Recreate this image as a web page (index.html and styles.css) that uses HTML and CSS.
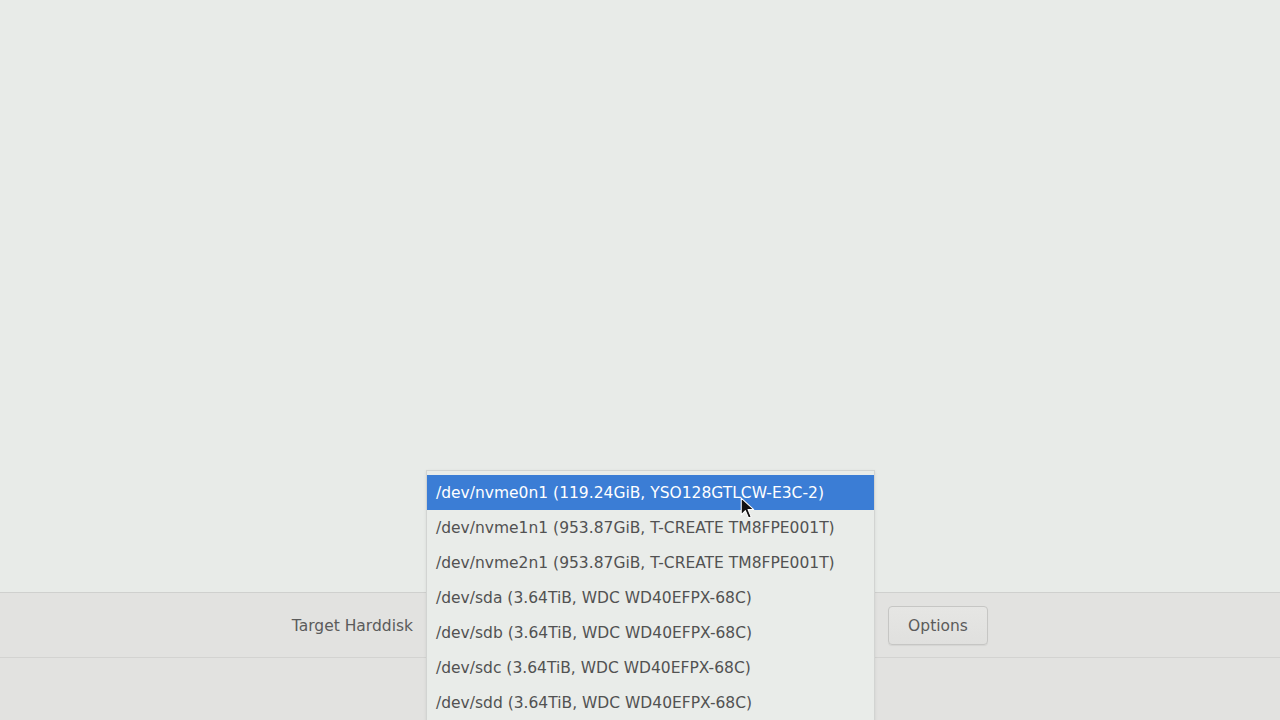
FILE: index.html
```html
<!DOCTYPE html>
<html>
<head>
<meta charset="utf-8">
<link rel="stylesheet" href="styles.css">
</head>
<body>
<div class="page">
  <div class="workspace"></div>
  <div class="bar">
    <div class="label">Target Harddisk</div>
    <div class="combo"></div>
    <button class="btn">Options</button>
  </div>
  <div class="footer"></div>
</div>
<div class="popup">
  <div class="item selected">/dev/nvme0n1 (119.24GiB, YSO128GTLCW-E3C-2)</div>
  <div class="item">/dev/nvme1n1 (953.87GiB, T-CREATE TM8FPE001T)</div>
  <div class="item">/dev/nvme2n1 (953.87GiB, T-CREATE TM8FPE001T)</div>
  <div class="item">/dev/sda (3.64TiB, WDC WD40EFPX-68C)</div>
  <div class="item">/dev/sdb (3.64TiB, WDC WD40EFPX-68C)</div>
  <div class="item">/dev/sdc (3.64TiB, WDC WD40EFPX-68C)</div>
  <div class="item">/dev/sdd (3.64TiB, WDC WD40EFPX-68C)</div>
</div>
<svg class="cursor" width="15" height="23" viewBox="0 0 14 22">
  <path d="M1 1 L1 17 L5 13 L8 20 L10.5 19 L7.5 12 L13 12 Z" fill="#111" stroke="#fff" stroke-width="1" stroke-linejoin="round"/>
</svg>
</body>
</html>
```

FILE: styles.css
```css
html, body {
  margin: 0;
  padding: 0;
  width: 1280px;
  height: 720px;
  overflow: hidden;
  background: #e8ebe8;
  font-family: "DejaVu Sans", sans-serif;
}
.page {
  display: flex;
  flex-direction: column;
  height: 720px;
}
.workspace {
  height: 592px;
  background: #e8ebe8;
}
.bar {
  height: 64px;
  background: #e2e2e0;
  border-top: 1px solid #cfd0ce;
  border-bottom: 1px solid #d3d3d1;
  display: flex;
  align-items: center;
}
.label {
  width: 413px;
  padding-top: 2px;
  text-align: right;
  font-size: 15.5px;
  color: #5b5b5b;
}
.combo {
  width: 449px;
  margin-left: 13px;
}
.btn {
  margin-left: 13px;
  width: 100px;
  height: 39px;
  border: 1px solid #c6c6c4;
  border-radius: 4px;
  background: linear-gradient(#e6e6e4, #e0e0de);
  box-shadow: 0 1px 1px rgba(0,0,0,0.06);
  font-family: "DejaVu Sans", sans-serif;
  font-size: 15.5px;
  color: #5b5b5b;
  padding: 1px 0 0 0;
}
.footer {
  flex: 1;
  background: #e2e2e0;
}
.popup {
  position: absolute;
  left: 426px;
  top: 470px;
  width: 447px;
  padding-top: 4px;
  background: #e9ece9;
  border: 1px solid #d2d4d2;
  box-shadow: 0 1px 3px rgba(0,0,0,0.08);
}
.item {
  height: 34px;
  line-height: 34px;
  padding-top: 1px;
  padding-left: 9px;
  font-size: 15.5px;
  color: #525252;
  white-space: nowrap;
}
.item.selected {
  background: #3b7dd5;
  color: #ffffff;
}
.cursor {
  position: absolute;
  left: 740px;
  top: 497px;
}
```
